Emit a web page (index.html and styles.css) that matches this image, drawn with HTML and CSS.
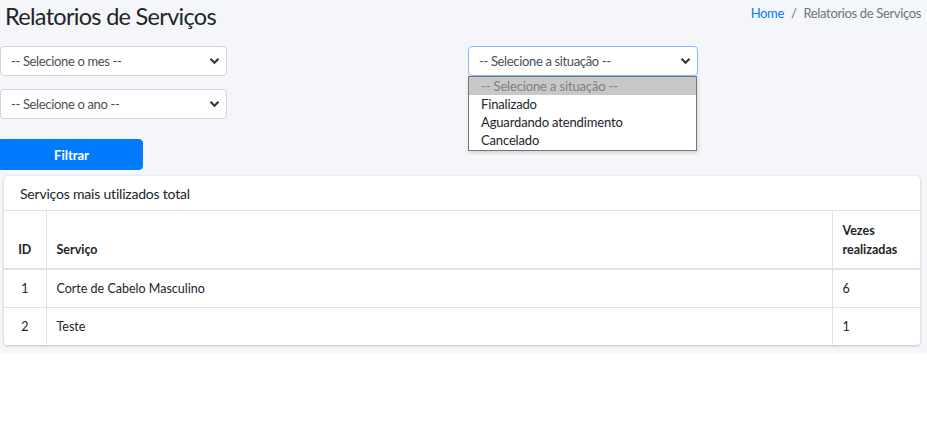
FILE: index.html
```html
<!DOCTYPE html>
<html lang="pt-BR">
<head>
<meta charset="utf-8">
<title>Relatorios de Serviços</title>
<link rel="stylesheet" href="styles.css">
</head>
<body>
<div class="wrapper">
  <div class="content-header">
    <h1 class="page-title">Relatorios de Serviços</h1>
    <ol class="breadcrumb">
      <li><a href="#" class="crumb-link">Home</a></li>
      <li class="crumb-sep">/</li>
      <li class="crumb-active">Relatorios de Serviços</li>
    </ol>
  </div>

  <form class="filters">
    <div class="filter-col left">
      <div class="select">
        <span>-- Selecione o mes --</span>
        <svg class="chev" width="11" height="8" viewBox="0 0 11 8"><path d="M1.5 1.8 L5.5 5.8 L9.5 1.8" fill="none" stroke="#343a40" stroke-width="2.2"/></svg>
      </div>
      <div class="select">
        <span>-- Selecione o ano --</span>
        <svg class="chev" width="11" height="8" viewBox="0 0 11 8"><path d="M1.5 1.8 L5.5 5.8 L9.5 1.8" fill="none" stroke="#343a40" stroke-width="2.2"/></svg>
      </div>
      <button type="button" class="btn-primary">Filtrar</button>
    </div>
    <div class="filter-col right">
      <div class="select-wrap">
        <div class="select focus">
          <span>-- Selecione a situação --</span>
          <svg class="chev" width="11" height="8" viewBox="0 0 11 8"><path d="M1.5 1.8 L5.5 5.8 L9.5 1.8" fill="none" stroke="#343a40" stroke-width="2.2"/></svg>
        </div>
        <ul class="dropdown">
          <li class="opt selected">-- Selecione a situação --</li>
          <li class="opt">Finalizado</li>
          <li class="opt">Aguardando atendimento</li>
          <li class="opt">Cancelado</li>
        </ul>
      </div>
    </div>
  </form>

  <div class="card">
    <div class="card-header">Serviços mais utilizados total</div>
    <table class="table">
      <thead>
        <tr>
          <th class="c-id">ID</th>
          <th class="c-name">Serviço</th>
          <th class="c-count">Vezes realizadas</th>
        </tr>
      </thead>
      <tbody>
        <tr>
          <td class="c-id">1</td>
          <td class="c-name">Corte de Cabelo Masculino</td>
          <td class="c-count">6</td>
        </tr>
        <tr>
          <td class="c-id">2</td>
          <td class="c-name">Teste</td>
          <td class="c-count">1</td>
        </tr>
      </tbody>
    </table>
  </div>
</div>
</body>
</html>
```

FILE: styles.css
```css
* { box-sizing: border-box; }
html, body { margin: 0; padding: 0; background: #ffffff; }
body {
  font-family: "Lato", "Liberation Sans", sans-serif;
  color: #212529;
  width: 927px;
}
.wrapper {
  background: #f4f6f9;
  padding-bottom: 8px;
}
.content-header {
  display: flex;
  justify-content: space-between;
  align-items: flex-start;
  padding: 0 6px 0 5px;
  height: 46px;
}
.page-title {
  margin: 0;
  font-size: 23.5px;
  letter-spacing: -0.7px;
  font-weight: 400;
  line-height: 32px;
  color: #212529;
}
.breadcrumb {
  display: flex;
  list-style: none;
  margin: 0;
  padding: 5px 0 0 0;
  font-size: 13px;
  letter-spacing: -0.35px;
  line-height: 16px;
}
.crumb-link { color: #007bff; text-decoration: none; }
.crumb-sep { color: #6c757d; padding: 0 7px; }
.crumb-active { color: #6c757d; }

.filters {
  display: flex;
  align-items: flex-start;
}
.filter-col.left {
  width: 468px;
  display: flex;
  flex-direction: column;
  align-items: flex-start;
}
.filter-col.left .select { width: 227px; margin-bottom: 13px; }
.filter-col.left .select + .select { margin-bottom: 20px; }
.select-wrap { position: relative; width: 230px; }
.select {
  height: 30px;
  background: #ffffff;
  border: 1px solid #ced4da;
  border-radius: 4px;
  display: flex;
  align-items: center;
  justify-content: space-between;
  padding: 0 6px 0 10px;
  font-size: 13px;
  letter-spacing: -0.35px;
  color: #495057;
}
.select.focus { border-color: #80bdff; }
.chev { display: block; }
.btn-primary {
  width: 143px;
  height: 31px;
  background: #007bff;
  border: 1px solid #007bff;
  border-radius: 0 4px 4px 0;
  color: #ffffff;
  font-family: inherit;
  font-size: 13px;
  font-weight: 700;
  padding: 0;
}
.dropdown {
  position: absolute;
  left: 0;
  top: 30px;
  width: 229px;
  margin: 0;
  padding: 0 0 1px 0;
  list-style: none;
  background: #ffffff;
  border: 1px solid #767676;
  box-shadow: 1px 2px 4px rgba(0,0,0,0.15);
  z-index: 5;
}
.opt {
  height: 18px;
  line-height: 18px;
  padding-left: 12px;
  font-size: 13px;
  letter-spacing: -0.15px;
  color: #212529;
}
.opt.selected { background: #c8c8c8; color: #808080; }

.card {
  margin-left: 4px;
  width: 916px;
  background: #ffffff;
  border-radius: 3px;
  box-shadow: 0 0 1px rgba(0,0,0,0.125), 0 1px 3px rgba(0,0,0,0.2);
  margin-top: 6px;
}
.card-header {
  height: 35px;
  line-height: 36px;
  padding: 0 16px;
  font-size: 14px;
  letter-spacing: -0.2px;
  color: #212529;
  border-bottom: 1px solid rgba(0,0,0,0.125);
}
.table {
  width: 100%;
  border-collapse: collapse;
  font-size: 12.5px;
}
.table th, .table td {
  border: 1px solid #dee2e6;
  text-align: left;
  padding: 0 10px;
}
.table tr > :first-child { border-left: 0; }
.table tr > :last-child { border-right: 0; }
.table tbody tr:last-child td { border-bottom: 0; }
.table thead th {
  border-top: 0;
  border-bottom: 2px solid #dee2e6;
  font-weight: 700;
  height: 58px;
  vertical-align: bottom;
  padding-bottom: 9px;
  line-height: 19px;
}
.table td { height: 38px; vertical-align: middle; }
.c-id { width: 42px; text-align: center !important; }
.c-count { width: 88px; }
```
